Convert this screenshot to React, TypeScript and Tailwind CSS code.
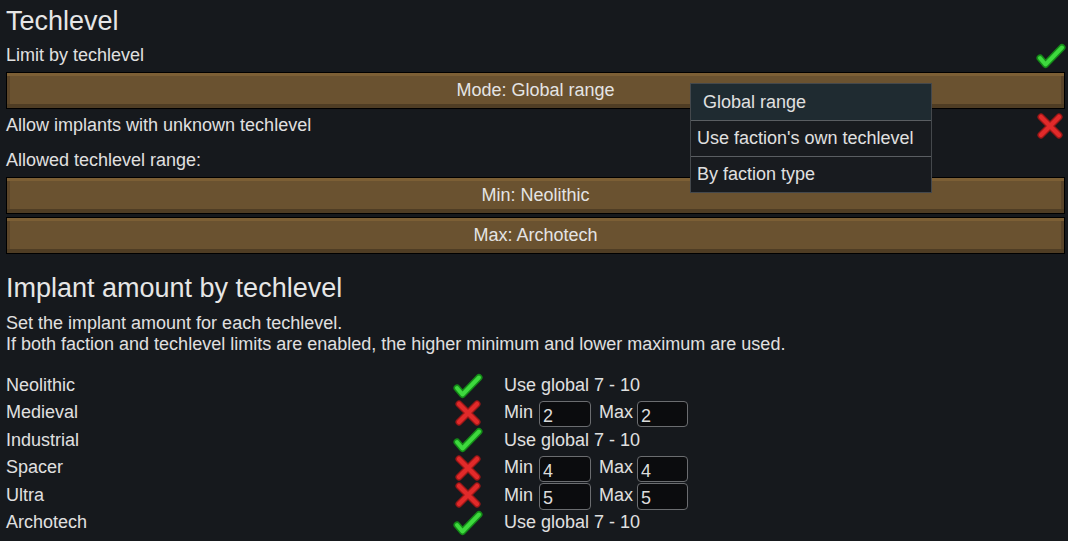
import React from 'react';

const font = "font-['Liberation_Sans',Arial,sans-serif]";

const Check: React.FC = () => (
  <svg width="30" height="26" viewBox="0 0 30 26">
    <path d="M4 15 L9.5 21.5 L26 4.5" fill="none" stroke="#148a18" strokeWidth="7" strokeLinecap="round" strokeLinejoin="round" />
    <path d="M4 15 L9.5 21.5 L26 4.5" fill="none" stroke="#3ed93e" strokeWidth="4" strokeLinecap="round" strokeLinejoin="round" />
  </svg>
);

const Cross: React.FC = () => (
  <svg width="28" height="28" viewBox="0 0 28 28">
    <path d="M5 5 L23 23 M23 5 L5 23" fill="none" stroke="#9c1717" strokeWidth="7" strokeLinecap="round" />
    <path d="M5 5 L23 23 M23 5 L5 23" fill="none" stroke="#e12a2a" strokeWidth="4.5" strokeLinecap="round" />
  </svg>
);

const WoodButton: React.FC<{ label: string; className?: string }> = ({ label, className }) => (
  <div
    className={`h-[37px] border border-black bg-[#6a5230] shadow-[inset_0_3px_0_#7c5f35,inset_0_-4px_0_#4f3d24,inset_3px_0_0_#5b4529,inset_-3px_0_0_#59442a] flex items-center justify-center text-[18px] text-[#e4e4e4] ${className ?? ''}`}
  >
    {label}
  </div>
);

type Level = { name: string; global: boolean; min?: number; max?: number };

const levels: Level[] = [
  { name: 'Neolithic', global: true },
  { name: 'Medieval', global: false, min: 2, max: 2 },
  { name: 'Industrial', global: true },
  { name: 'Spacer', global: false, min: 4, max: 4 },
  { name: 'Ultra', global: false, min: 5, max: 5 },
  { name: 'Archotech', global: true },
];

const NumBox: React.FC<{ value: number; className?: string }> = ({ value, className }) => (
  <div
    className={`mt-[1.5px] h-[26.5px] rounded-[4px] border border-[#6b6d70] bg-[#0b0c0e] pl-[3px] pt-[2px] text-[18px] leading-[24px] text-[#dcdcdc] ${className ?? ''}`}
  >
    {value}
  </div>
);

const App: React.FC = () => {
  return (
    <div className={`relative w-[1068px] h-[541px] overflow-hidden bg-[#16191d] text-[#e0e0e0] pl-[6px] pr-[3px] ${font}`}>
      {/* Techlevel */}
      <div className="h-[41px] text-[27px] leading-[43px] text-[#e6e6e6]">Techlevel</div>
      <div className="h-[28px] flex items-center justify-between text-[18px] leading-[28px]">
        <span>Limit by techlevel</span>
        <span className="mr-[-1px] mt-[2px]"><Check /></span>
      </div>
      <WoodButton label="Mode: Global range" className="mt-[3px]" />
      <div className="mt-[2px] h-[28px] flex items-center justify-between text-[18px] leading-[28px]">
        <span>Allow implants with unknown techlevel</span>
        <span className="mr-[1px] mt-[2px]"><Cross /></span>
      </div>
      <div className="mt-[7px] h-[28px] text-[18px] leading-[28px]">Allowed techlevel range:</div>
      <WoodButton label="Min: Neolithic" className="mt-[3px]" />
      <WoodButton label="Max: Archotech" className="mt-[3px]" />

      {/* Implant amount */}
      <div className="mt-[13px] h-[41px] text-[27px] leading-[42px] text-[#e6e6e6]">Implant amount by techlevel</div>
      <div className="mt-[5px] text-[18px] leading-[21px]">
        <div>Set the implant amount for each techlevel.</div>
        <div>If both faction and techlevel limits are enabled, the higher minimum and lower maximum are used.</div>
      </div>

      <div className="mt-[17px]">
        {levels.map((l) => (
          <div key={l.name} className="h-[27.4px] flex items-start text-[18px] leading-[27.4px]">
            <div className="w-[447px]">{l.name}</div>
            <div className="w-[51px] h-full flex items-center">
              {l.global ? <Check /> : <span className="ml-[1px]"><Cross /></span>}
            </div>
            {l.global ? (
              <div>Use global 7 - 10</div>
            ) : (
              <div className="flex items-start">
                <span>Min</span>
                <NumBox value={l.min!} className="ml-[6px] w-[52px]" />
                <span className="ml-[8px]">Max</span>
                <NumBox value={l.max!} className="ml-[4px] w-[51px]" />
              </div>
            )}
          </div>
        ))}
      </div>

      {/* Dropdown menu open over the Mode button */}
      <div className="absolute left-[690px] top-[83px] w-[242px] border border-[#44484c] bg-[#181b1f] text-[18px] text-[#e0e0e0]">
        <div className="h-[36px] flex items-center pl-[12px] bg-[#1f2b31]">Global range</div>
        <div className="h-[36px] flex items-center pl-[6px] border-t border-[#5a5e62]">Use faction's own techlevel</div>
        <div className="h-[36px] flex items-center pl-[6px] border-t border-[#5a5e62]">By faction type</div>
      </div>
    </div>
  );
};

export default App;
